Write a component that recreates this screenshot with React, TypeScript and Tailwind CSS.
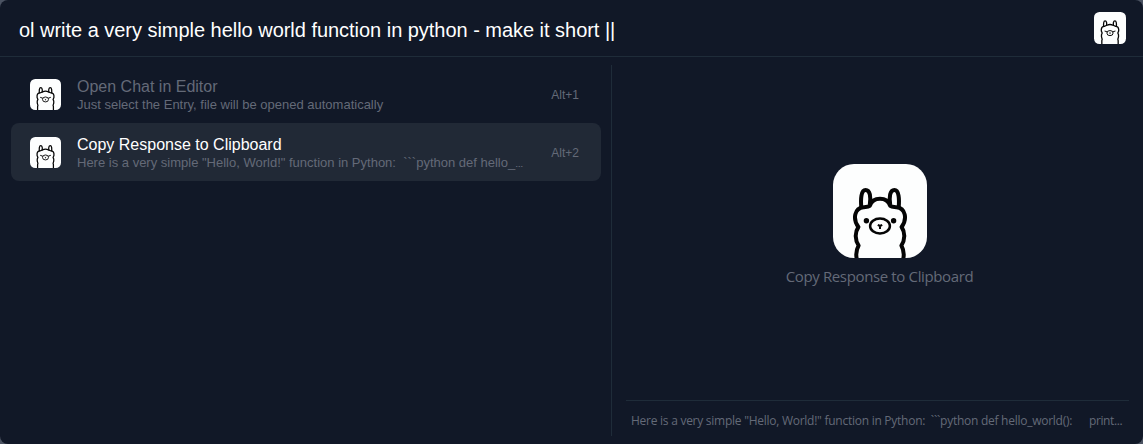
type LlamaProps = { className: string; small?: boolean };

function Llama({ className, small = false }: LlamaProps) {
  const stroke = small ? 3.8 : 4;
  return (
    <svg viewBox="0 0 94 94" className={className} fill="none" aria-hidden="true">
      <rect width="94" height="94" rx={small ? 16 : 21} fill="#fdfefe" />
      <g stroke="#050505" strokeWidth={stroke} strokeLinecap="butt" strokeLinejoin="round">
        <path d="M28.3 43.5C27.6 35 28 26 32.6 26C37.2 26 38 33 36.8 41" />
        <path d="M65.7 43.5C66.4 35 66 26 61.4 26C56.8 26 56 33 57.2 41" />
        {small ? (
          <path d="M23 95V84L24 80L22 73V67L24 62L21.5 56V50C22.5 45 26 42.4 30 42.4L38 39C43 36.5 51 36.5 56 39L64 42.4C68 42.4 71.5 45 72.5 50V56L70 62L72 67V73L70 80L71 84V95" />
        ) : (
          <path d="M23.8 95C22.6 90 23.2 86 25.6 81.5C22 76 21.6 68.5 25.4 63C19.5 55 21.4 44 30.5 43.2C33 42.8 35 43 36.8 41.8C40 32.4 54 32.4 57.2 41.8C59 43 61 42.8 63.5 43.2C72.6 44 74.5 55 68.6 63C72.4 68.5 72 76 68.4 81.5C70.8 86 71.4 90 70.2 95" />
        )}
        <ellipse cx="47" cy="62" rx={small ? 9 : 9.9} ry="7.5" strokeWidth={small ? 2.8 : 2.5} />
        <path d="M44.8 60.8L47 62L49.2 60.8M47 61.5V65" strokeWidth="2" />
        {small && <path d="M31 55.5L39 58.5M63 55.5L55 58.5" strokeWidth="3" />}
      </g>
      {!small && <circle cx="33.4" cy="56.8" r="2.7" fill="#050505" />}
      {!small && <circle cx="60.6" cy="56.8" r="2.7" fill="#050505" />}
    </svg>
  );
}

type ResultProps = {
  title: string;
  subtitle: string;
  shortcut: string;
  selected?: boolean;
  clipped?: boolean;
};

function Result({ title, subtitle, shortcut, selected = false, clipped = false }: ResultProps) {
  return (
    <div
      className={`flex h-[58px] items-center rounded-lg pl-[19px] pr-[22px] ${
        selected ? "bg-[#212936]" : ""
      }`}
    >
      <Llama small className="mr-4 h-[31px] w-[31px] shrink-0" />
      <div className="flex-1 whitespace-pre pt-[3px]">
        <div className={`text-base leading-[18px] ${selected ? "text-white" : "text-[#646a78]"}`}>
          {title}
        </div>
        <div className="h-[18px] text-[13px] leading-[18px] text-[#646a78]">
          {subtitle}
          {clipped && <span className="text-[8px] font-bold leading-none">…</span>}
        </div>
      </div>
      <span className="pt-[2px] text-xs text-[#646a78]">{shortcut}</span>
    </div>
  );
}

export default function App() {
  return (
    <div className="h-[444px] w-[1143px] bg-[#4b5362] font-['Liberation_Sans',sans-serif]">
      <div className="flex h-full flex-col overflow-hidden rounded-lg bg-[#111827]">
        <header className="flex h-[57px] shrink-0 items-center justify-between border-b border-[#1f2c39] pl-[19px] pr-[17px]">
          <span className="whitespace-pre pt-1 text-xl tracking-[-0.03px] text-white">
            ol write a very simple hello world function in python - make it short ||
          </span>
          <Llama small className="h-8 w-8" />
        </header>
        <main className="flex flex-1 pb-2 pt-2">
          <section className="w-[611px] shrink-0 pl-[11px] pr-[10px]">
            <Result
              title="Open Chat in Editor"
              subtitle="Just select the Entry, file will be opened automatically"
              shortcut="Alt+1"
            />
            <Result
              selected
              clipped
              title="Copy Response to Clipboard"
              subtitle={'Here is a very simple "Hello, World!" function in Python:  ```python def hello_'}
              shortcut="Alt+2"
            />
          </section>
          <section className="flex min-w-0 flex-1 flex-col border-l border-[#1f2c39] pl-[14px] pr-[14px] font-['Open_Sans',sans-serif] text-[#646a78]">
            <div className="flex flex-1 flex-col items-center pl-1 pt-[99px]">
              <Llama className="h-[94px] w-[94px]" />
              <div className="mt-2 whitespace-pre text-[15px] leading-5 tracking-[-0.36px]">
                Copy Response to Clipboard
              </div>
            </div>
            <div className="flex h-9 border-t border-[#1f2c39] pl-[5px] pt-[11px] text-xs leading-[18px] tracking-[-0.26px]">
              <span className="w-[458px] shrink-0 whitespace-pre">
                {'Here is a very simple "Hello, World!" function in Python:  ```python def hello_world():'}
              </span>
              <span className="tracking-[-0.4px]">print...</span>
            </div>
          </section>
        </main>
      </div>
    </div>
  );
}
